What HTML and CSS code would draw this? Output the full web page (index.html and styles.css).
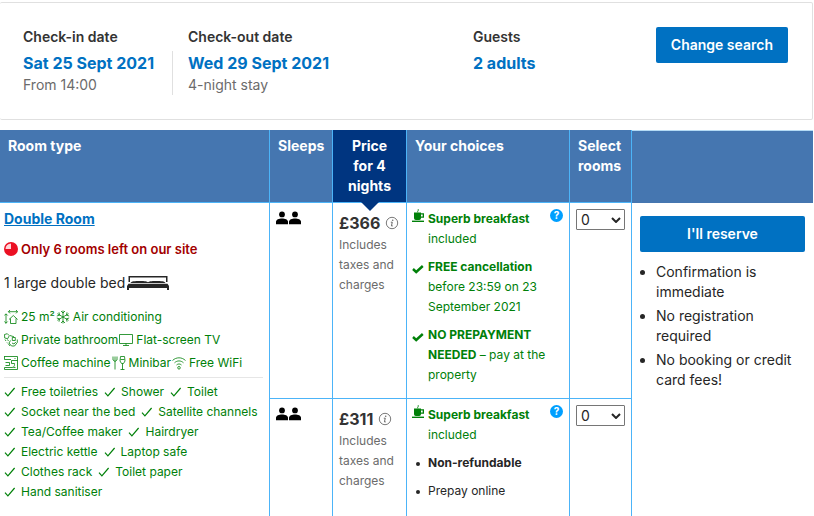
FILE: index.html
```html
<!DOCTYPE html>
<html lang="en-GB">
<head>
<meta charset="utf-8">
<title>Room availability</title>
<link rel="stylesheet" href="styles.css">
</head>
<body>
<svg class="sprite" aria-hidden="true">
  <symbol id="tick" viewBox="0 0 12 12"><path d="M1 6.600 3.900 9.800 10.600 2" fill="none" stroke="currentColor" stroke-width="1.200"/></symbol>
  <symbol id="bold-tick" viewBox="0 0 12 12"><path d="M1 6 4.200 9 10.800 3" fill="none" stroke="currentColor" stroke-width="2.400"/></symbol>
  <symbol id="people" viewBox="0 0 25 14"><g fill="currentColor"><circle cx="6" cy="3.400" r="2.900"/><path d="M0 13.200v-2.400C0 8.500 3 7.400 6 7.400s6 1.100 6 3.400v2.400z"/><circle cx="19" cy="3.400" r="2.900"/><path d="M13 13.200v-2.400c0-2.300 3-3.400 6-3.400s6 1.100 6 3.400v2.400z"/></g></symbol>
  <symbol id="cup" viewBox="0 0 12 14"><g fill="currentColor"><path d="M2 3.500h7v.8h3v4.400H9c0 1.300-.7 2.300-1.700 2.300H3.800C2.700 11 2 10 2 8.700zM9 5.500v2h1.700v-2z"/><path d="M0 11.600h12V13H0z"/><path d="M5.800 3.400C5 2.300 6.900 1.700 6.200.2" fill="none" stroke="currentColor" stroke-width=".9"/></g></symbol>
  <symbol id="info" viewBox="0 0 14 14"><circle cx="7" cy="7" r="5.700" fill="none" stroke="currentColor" stroke-width=".9"/><circle cx="7.700" cy="4.200" r=".8" fill="currentColor"/><path d="M5.800 6.200h1.500L6.400 9.900h1.400" fill="none" stroke="currentColor"/></symbol>
</svg>

<section class="search">
  <div class="field">
    <div class="label">Check-in date</div>
    <div class="details"><div class="value">Sat 25 Sept 2021</div><div class="note">From 14:00</div></div>
  </div>
  <div class="field checkout">
    <div class="label">Check-out date</div>
    <div class="details"><div class="value">Wed 29 Sept 2021</div><div class="note">4-night stay</div></div>
  </div>
  <div class="field">
    <div class="label">Guests</div>
    <div class="details"><div class="value">2 adults</div></div>
  </div>
  <button type="button" class="btn">Change search</button>
</section>

<table class="rooms">
  <colgroup><col class="c-room"><col class="c-sleeps"><col class="c-price"><col class="c-choices"><col class="c-select"><col></colgroup>
  <thead>
    <tr>
      <th scope="col">Room type</th>
      <th scope="col">Sleeps</th>
      <th scope="col" class="price-head">Price for 4 nights</th>
      <th scope="col">Your choices</th>
      <th scope="col" id="select-head">Select rooms</th>
      <td class="blank-head"></td>
    </tr>
  </thead>
  <tbody>
    <tr>
      <td rowspan="2" class="room last">
        <a href="#double" class="room-name">Double Room</a>
        <div class="scarce">
          <svg class="ic" viewBox="0 0 14 14"><circle cx="7" cy="7" r="7" fill="#eb1023"/><path d="M7 7V1.500A5.500 5.500 0 0 0 1.500 7z" fill="#ffd5d8"/></svg>
          Only 6 rooms left on our site
        </div>
        <div class="bed">1 large double bed
          <svg class="bed-ic" viewBox="0 0 42 14"><g fill="#262626"><path d="M1.500 0h39v6H39V1.500H3V6H1.500z"/><path d="M3.500 7C4 5.300 8 5 13 5s7 .4 8 1.300C22 5.400 24 5 29 5s9 .3 9.500 2zM1.500 7.800h39l1.500 2.200v4h-2v-2H2v2H0v-4z"/></g></svg>
        </div>
        <ul class="facilities">
          <li><svg class="ic" viewBox="0 0 14 14"><path d="M2 4v9.500M.3 5.500 2 3.800l1.700 1.700M.3 11.500 2 13.200l1.700-1.700M4.500 1.700h9M6 0 4.400 1.700 6 3.400M12 0l1.600 1.700L12 3.400M5 9.500l4.300-4 4.300 4M6.500 8.500v5h5.500v-5"/></svg>25 m²</li>
          <li><svg class="ic" viewBox="0 0 14 14"><path d="M7 .5v13M1.400 3.700l11.200 6.600M12.600 3.700 1.400 10.300M5 1l2 2 2-2M5 13l2-2 2 2M.8 6l2.700-.8L3 2.300M13.200 8l-2.700.8.5 2.900M13.200 6l-2.700-.8.5-2.900M.8 8l2.700.8-.5 2.900"/></svg>Air conditioning</li>
          <li><svg class="ic" viewBox="0 0 14 14"><path d="M.5 1.500 3.300.7l2 2-1.600 3-3-.7zM1 6.500 2 8M3.500 6.500l1 1.500M6 2.500l4 1.300M3 9.500l1 1M4.500 11l1.500 2M8.300 4.500h3v3h-3zM6.500 7.500 5 10l2.500 3h3l2.800-3.500V6.500M8 10l2 1 1.800-2"/></svg>Private bathroom</li>
          <li><svg class="ic" viewBox="0 0 14 14"><path d="M.5 1.500h13v9H.5zM7 10.500v2M4 12.500h6"/></svg>Flat-screen TV</li>
          <li><svg class="ic" viewBox="0 0 14 14"><path d="M0 .5h13.500v13H.5v-2h7.500c2 0 2.500-1.500 2.500-3v-1h-3v-3h6M.5.5v3H7M1.500 6.500h4v3h-4M10.500 2.500h1M9.500 11.500h2"/></svg>Coffee machine</li>
          <li><svg class="ic" viewBox="0 0 14 14"><path d="M1 .5V4l2 1.500L5 4V.5M3 .5v13M8.500.5h4l.5 4.500-1.500 2.500h-2L8 5zM8.500 3.500h4M10.500 7.500v6M8.500 13.500h4"/></svg>Minibar</li>
          <li><svg class="ic" viewBox="0 0 14 14"><path d="M.5 4.500c3.800-3.600 9.200-3.600 13 0M2.500 6.800c2.700-2.500 6.300-2.500 9 0M4.500 9c1.600-1.400 3.400-1.400 5 0"/><circle cx="7" cy="11.800" r="1.300"/></svg>Free WiFi</li>
        </ul>
        <ul class="extras">
          <li><svg><use href="#tick"/></svg>Free toiletries</li>
          <li><svg><use href="#tick"/></svg>Shower</li>
          <li><svg><use href="#tick"/></svg>Toilet</li>
          <li><svg><use href="#tick"/></svg>Socket near the bed</li>
          <li><svg><use href="#tick"/></svg>Satellite channels</li>
          <li><svg><use href="#tick"/></svg>Tea/Coffee maker</li>
          <li class="break"><svg><use href="#tick"/></svg>Hairdryer</li>
          <li><svg><use href="#tick"/></svg>Electric kettle</li>
          <li class="break"><svg><use href="#tick"/></svg>Laptop safe</li>
          <li><svg><use href="#tick"/></svg>Clothes rack</li>
          <li><svg><use href="#tick"/></svg>Toilet paper</li>
          <li><svg><use href="#tick"/></svg>Hand sanitiser</li>
        </ul>
      </td>
      <td class="sleeps"><svg role="img" aria-label="2 people"><use href="#people"/></svg></td>
      <td class="price first-price"><div class="amount">£366 <svg><use href="#info"/></svg></div><div class="tax">Includes taxes and charges</div></td>
      <td class="choices">
        <ul>
          <li class="green breakfast"><svg class="mark cup"><use href="#cup"/></svg><span><b>Superb breakfast</b> included</span><button type="button" class="help" aria-label="Breakfast details">?</button></li>
          <li class="green"><svg class="mark"><use href="#bold-tick"/></svg><span><b>FREE cancellation</b> before 23:59 on 23 September 2021</span></li>
          <li class="green"><svg class="mark"><use href="#bold-tick"/></svg><span><b>NO PREPAYMENT NEEDED</b> – pay at the property</span></li>
        </ul>
      </td>
      <td class="select"><div class="picker"><select aria-labelledby="select-head"><option>0</option><option>1</option><option>2</option></select><svg viewBox="0 0 10 6"><path d="M1 1l4 4 4-4"/></svg></div></td>
      <td rowspan="2" class="reserve last">
        <button type="button" class="btn">I'll reserve</button>
        <ul>
          <li>Confirmation is immediate</li>
          <li>No registration required</li>
          <li>No booking or credit card fees!</li>
        </ul>
      </td>
    </tr>
    <tr>
      <td class="sleeps last"><svg role="img" aria-label="2 people"><use href="#people"/></svg></td>
      <td class="price last"><div class="amount">£311 <svg><use href="#info"/></svg></div><div class="tax">Includes taxes and charges</div></td>
      <td class="choices last">
        <ul>
          <li class="green breakfast"><svg class="mark cup"><use href="#cup"/></svg><span><b>Superb breakfast</b> included</span><button type="button" class="help" aria-label="Breakfast details">?</button></li>
          <li><i class="dot"></i><b>Non-refundable</b></li>
          <li><i class="dot"></i><span>Prepay online</span></li>
        </ul>
      </td>
      <td class="select last"><div class="picker"><select aria-labelledby="select-head"><option>0</option><option>1</option><option>2</option></select><svg viewBox="0 0 10 6"><path d="M1 1l4 4 4-4"/></svg></div></td>
    </tr>
  </tbody>
</table>
</body>
</html>
```
FILE: styles.css
```css
* { box-sizing: border-box; }

body {
  margin: 0;
  padding: 2px 1px 0 0;
  background: #fff;
  color: #262626;
  font: 14px/20px Inter, "Liberation Sans", sans-serif;
}

ul { margin: 0; padding: 0; list-style: none; }
svg { display: block; flex: none; }
.sprite { position: absolute; width: 0; height: 0; }

.btn {
  height: 36px;
  padding: 0 15px;
  border: 0;
  border-radius: 2px;
  background: #0071c2;
  color: #fff;
  font: 600 14px/20px Inter, sans-serif;
}

/* Search summary */
.search {
  display: grid;
  grid-template-columns: 149px 301px 1fr auto;
  align-items: start;
  margin-bottom: 10px;
  padding: 24px 24px 24px 23px;
  border: 1px solid #e0e0e0;
  border-left: 0;
  border-radius: 2px;
}
.label { font-weight: 600; margin-bottom: 4px; color: #333; }
.details { min-height: 44px; }
.value { font-size: 16px; line-height: 24px; font-weight: 700; color: #0071c2; }
.note { color: #6b6b6b; }
.checkout .details { padding-left: 15px; border-left: 1px solid #e0e0e0; }
.checkout .label { padding-left: 16px; }

/* Availability table */
.rooms {
  width: 100%;
  table-layout: fixed;
  border-collapse: separate;
  border-spacing: 0;
}
.c-room { width: 270px; }
.c-sleeps { width: 63px; }
.c-price { width: 74px; }
.c-choices { width: 163px; }
.c-select { width: 62px; }

th, td {
  padding: 6px 4px;
  border-right: 1px solid #4cb4f8;
  border-bottom: 1px solid #4cb4f8;
  text-align: left;
  vertical-align: top;
}
th {
  padding: 6px 8px;
  background: #4576b0;
  color: #fff;
  font-weight: 700;
}
.price-head { background: #003580; text-align: center; }
.blank-head {
  background: #4576b0;
  border-right: 0;
  border-top: 1px solid #b4dbf5;
  border-bottom-color: #4576b0;
}
td.last { border-bottom: 0; }

/* Room description */
.room-name { display: block; font-weight: 700; color: #0071c2; }
.scarce {
  display: flex;
  gap: 3px;
  align-items: center;
  margin-top: 10px;
  color: #a30000;
  font-size: 13px;
  font-weight: 600;
}
.ic { width: 14px; height: 14px; }
.bed { display: flex; align-items: center; gap: 2px; margin-top: 14px; }
.bed-ic { width: 42px; height: 14px; }
.facilities, .extras { display: flex; flex-wrap: wrap; font-size: 12px; color: #008009; }
.facilities { gap: 3px 1px; margin-top: 14px; }
.facilities li, .extras li { display: flex; align-items: center; white-space: nowrap; }
.facilities li { gap: 3px; }
.facilities path, .facilities circle { fill: none; stroke: currentColor; stroke-width: .8; }
.extras {
  column-gap: 6px;
  margin: 4px 2px 8px 0;
  padding-top: 4px;
  border-top: 1px solid #e6e6e6;
}
.extras svg { width: 12px; height: 12px; margin-right: 5px; }
.extras .break { margin-right: 40px; }

/* Offer columns */
.sleeps { padding: 8px 6px; }
.sleeps svg { width: 25px; height: 14px; color: #000; }

.price { padding: 10px 6px; }
.first-price { position: relative; }
.first-price::before {
  content: "";
  position: absolute;
  top: -1px;
  left: 50%;
  margin-left: -9px;
  border: 9px solid transparent;
  border-top-color: #003580;
  border-bottom: 0;
}
.amount {
  display: flex;
  align-items: center;
  gap: 5px;
  font-size: 16px;
  font-weight: 700;
  color: #333;
}
.amount svg { width: 14px; height: 14px; color: #6b6b6b; }
.tax { font-size: 12px; color: #6b6b6b; padding-top: 2px; }

.choices { padding: 6px 6px 13px 5px; font-size: 12px; }
.choices.last { padding-bottom: 15px; }
.choices li { display: flex; align-items: flex-start; gap: 4px; }
.choices li + li { margin-top: 8px; }
.choices li > span { flex: 1; padding-right: 8px; }
.choices .breakfast > span { padding-right: 0; }
.green { color: #008009; }
.mark { width: 12px; height: 12px; margin-top: 6px; }
.cup { height: 14px; margin-top: 0; }
.dot { width: 4px; height: 4px; margin: 9px 4px 0; border-radius: 50%; background: #262626; }
.help {
  width: 13px;
  height: 13px;
  padding: 0;
  border: 0;
  border-radius: 50%;
  background: #009fff;
  color: #fff;
  font: 700 10px/13px Inter, sans-serif;
}

.select { padding: 6px; }
.picker { display: grid; align-items: center; }
.picker > * { grid-area: 1 / 1; }
.picker select {
  appearance: none;
  height: 21px;
  width: 100%;
  padding: 0 4px;
  border: 1px solid #767676;
  border-radius: 1px;
  background: #fff;
  color: #262626;
  font: 14px/19px Inter, sans-serif;
}
.picker svg {
  justify-self: end;
  width: 10px;
  height: 6px;
  margin-right: 4px;
  fill: none;
  stroke: #262626;
  stroke-width: 2;
  pointer-events: none;
}

.reserve { padding: 13px 8px; border-right: 0; }
.reserve .btn { width: 100%; }
.reserve ul { margin-top: 10px; padding-left: 16px; list-style: disc; }
.reserve li { margin-bottom: 4px; }
```
